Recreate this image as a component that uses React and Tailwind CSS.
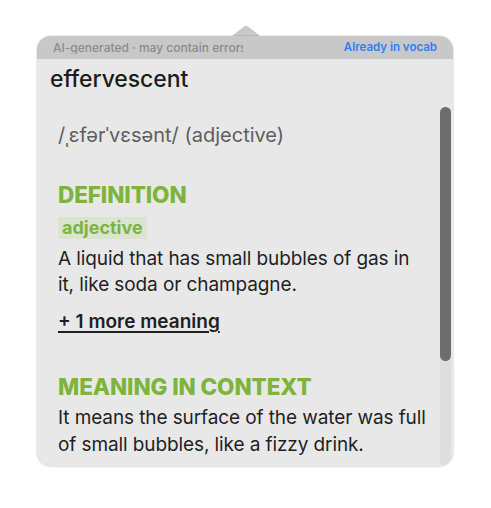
import React from "react";

export default function App() {
  const font = { fontFamily: "Inter, 'Noto Sans', sans-serif" };
  return (
    <div className="w-[491px] h-[508px] bg-white pt-[25px] pl-[37px]" style={font}>
      <div className="w-[416px] flex flex-col">
        <div className="flex justify-center h-[11px] pl-[2px]">
          <svg width="28" height="11" viewBox="0 0 28 11">
            <path d="M0 11 L12 1.5 Q14 0 16 1.5 L28 11 Z" fill="#c8c8c8" />
          </svg>
        </div>
        <div className="h-[430px] rounded-[14px] overflow-hidden bg-[#e8e8e8] flex flex-col shadow-[0_0_0_1px_rgba(0,0,0,0.06),0_1px_3px_rgba(0,0,0,0.08)]">
          <div className="h-[23px] bg-[#c8c8c8] flex items-center justify-between pl-[16px] pr-[16px]">
            <div className="w-[190px] overflow-hidden whitespace-nowrap text-[12px] font-medium text-[#8b8b8b] leading-none">
              AI-generated · may contain errors
            </div>
            <div className="text-[11.5px] font-semibold text-[#2f7ff5] leading-none">Already in vocab</div>
          </div>
          <div className="h-[41px] flex items-center pl-[13px] pb-[1px]">
            <span className="text-[23px] font-medium text-[#1c1c1c] leading-none tracking-[-0.1px]">effervescent</span>
          </div>
          <div className="flex-1 flex min-h-0">
            <div className="flex-1 pl-[21px] pr-[4px] pt-[22px] overflow-hidden">
              <div className="text-[20px] text-[#5e5e5e] leading-[26px]">/ˌɛfərˈvɛsənt/ (adjective)</div>
              <div className="mt-[34px] text-[22.5px] font-extrabold text-[#7db43c] leading-[26px] tracking-[-0.1px]">DEFINITION</div>
              <div className="mt-[9px] inline-block bg-[#dbe4d0] px-[4px] h-[22px] text-[18px] font-bold text-[#7db43c] leading-[22px]">adjective</div>
              <div className="mt-[6px] text-[19px] text-[#1f1f1f] leading-[26px] tracking-[-0.1px] whitespace-nowrap">
                A liquid that has small bubbles of gas in
                <br />
                it, like soda or champagne.
              </div>
              <div className="mt-[12px] text-[19px] font-semibold text-[#1f1f1f] leading-[24px] underline underline-offset-[3px] decoration-[1.5px]">
                + 1 more meaning
              </div>
              <div className="mt-[40px] text-[22.5px] font-extrabold text-[#7db43c] leading-[26px] tracking-[-0.1px]">MEANING IN CONTEXT</div>
              <div className="mt-[4px] text-[19px] text-[#1f1f1f] leading-[27px] tracking-[-0.1px] whitespace-nowrap">
                It means the surface of the water was full
                <br />
                of small bubbles, like a fizzy drink.
              </div>
            </div>
            <div className="w-[15px] pl-[2px] pr-[2px] pt-[7px] bg-[#e8e8e8] flex flex-col">
              <div className="flex-1 bg-[#dedede] rounded-full flex flex-col">
                <div className="h-[254px] bg-[#6d6d6d] rounded-full" />
              </div>
            </div>
          </div>
        </div>
      </div>
    </div>
  );
}
